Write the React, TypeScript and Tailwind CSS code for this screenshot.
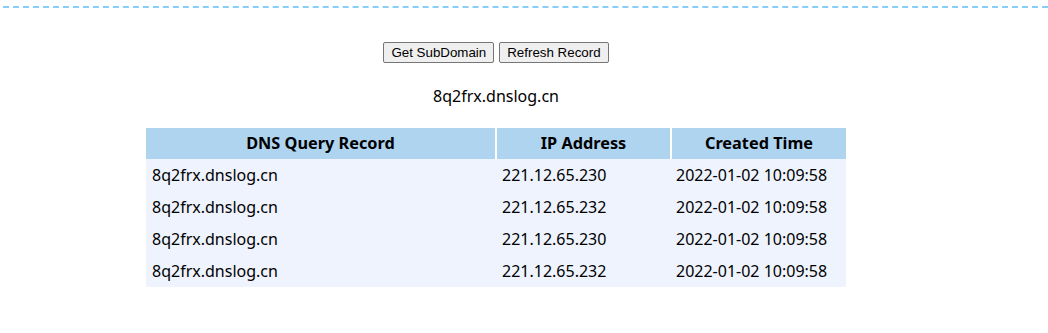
import React from 'react';

const records = [
  { domain: '8q2frx.dnslog.cn', ip: '221.12.65.230', time: '2022-01-02 10:09:58' },
  { domain: '8q2frx.dnslog.cn', ip: '221.12.65.232', time: '2022-01-02 10:09:58' },
  { domain: '8q2frx.dnslog.cn', ip: '221.12.65.230', time: '2022-01-02 10:09:58' },
  { domain: '8q2frx.dnslog.cn', ip: '221.12.65.232', time: '2022-01-02 10:09:58' },
];

function App() {
  return (
    <main className="w-[1048px] h-[333px] bg-white text-black font-['Noto_Sans',sans-serif]">
      <div className="pt-[6px] pl-[3px]">
        <div className="border-t-2 border-dashed border-[#87cefa]"></div>
      </div>
      <div className="w-[992px] flex flex-col items-center">
        <div className="mt-[34px] flex gap-[5px] font-['Liberation_Sans',sans-serif] text-[13.33px]">
          <button className="h-[21px] px-[7px] bg-[#efefef] border border-[#767676] rounded-[2px] leading-none">Get SubDomain</button>
          <button className="h-[21px] px-[7px] bg-[#efefef] border border-[#767676] rounded-[2px] leading-none">Refresh Record</button>
        </div>
        <p className="mt-[21px] text-[16px] leading-[24px]">8q2frx.dnslog.cn</p>
        <div className="mt-[20px] w-[700px] text-[16px]">
          <div className="grid grid-cols-[349px_173px_1fr] gap-x-[2px] font-bold text-[16.3px]">
            <div className="h-[31px] bg-[#afd4f0] flex items-center justify-center">DNS Query Record</div>
            <div className="h-[31px] bg-[#afd4f0] flex items-center justify-center">IP Address</div>
            <div className="h-[31px] bg-[#afd4f0] flex items-center justify-center">Created Time</div>
          </div>
          <div className="bg-[#eef3fe]">
            {records.map((r, i) => (
              <div key={i} className="grid grid-cols-[351px_174px_1fr] h-[32px] items-center">
                <div className="pl-[6px]">{r.domain}</div>
                <div className="pl-[5px]">{r.ip}</div>
                <div className="pl-[5px]">{r.time}</div>
              </div>
            ))}
          </div>
        </div>
      </div>
    </main>
  );
}

export default App;
